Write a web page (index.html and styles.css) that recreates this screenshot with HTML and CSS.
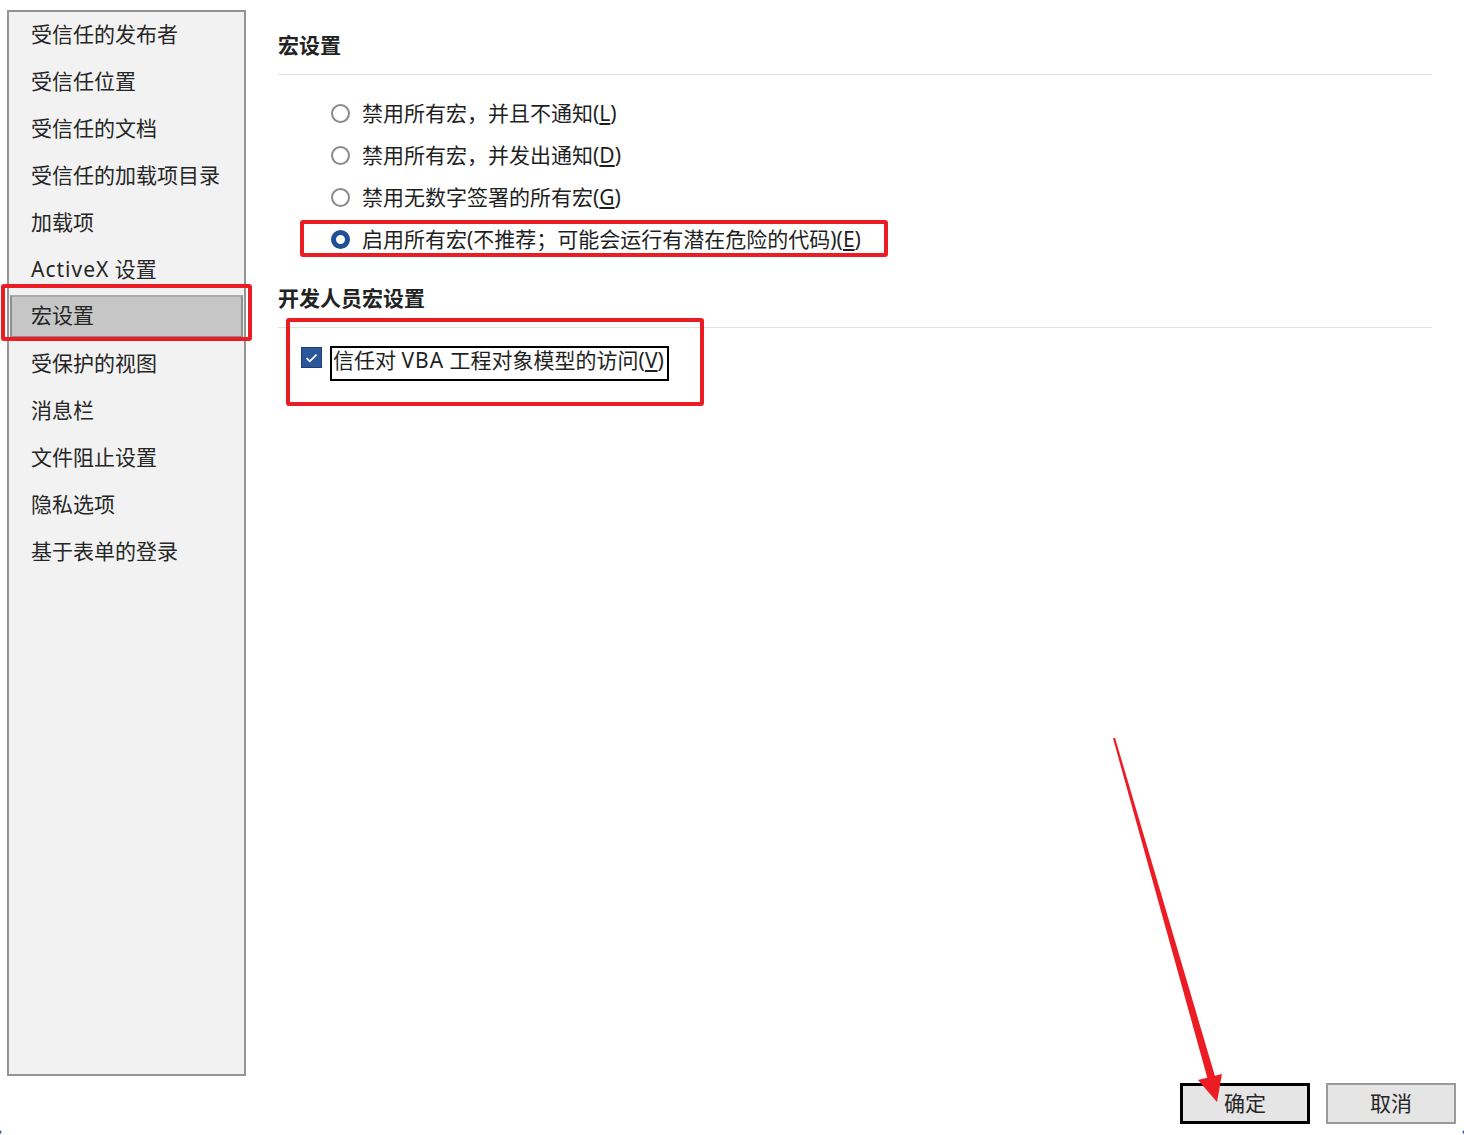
FILE: index.html
```html
<!DOCTYPE html>
<html lang="zh-CN">
<head>
    <meta charset="UTF-8">
    <meta name="viewport" content="width=device-width, initial-scale=1.0">
    <title>信任中心</title>
    <link rel="stylesheet" href="styles.css">
</head>
<body>

    <div class="dialog">
        <div class="content">
            <ul class="nav">
                <li class="nav-item">受信任的发布者</li>
                <li class="nav-item">受信任位置</li>
                <li class="nav-item">受信任的文档</li>
                <li class="nav-item">受信任的加载项目录</li>
                <li class="nav-item">加载项</li>
                <li class="nav-item"><span class="latin">ActiveX</span> 设置</li>
                <li class="nav-item active">宏设置<span class="mark nav-mark"></span></li>
                <li class="nav-item">受保护的视图</li>
                <li class="nav-item">消息栏</li>
                <li class="nav-item">文件阻止设置</li>
                <li class="nav-item">隐私选项</li>
                <li class="nav-item">基于表单的登录</li>
            </ul>

            <div class="main">
                <h2 class="section-title">宏设置</h2>
                <div class="radio-list">
                    <div class="radio-row"><span class="radio"></span>禁用所有宏，并且不通知(<u>L</u>)</div>
                    <div class="radio-row"><span class="radio"></span>禁用所有宏，并发出通知(<u>D</u>)</div>
                    <div class="radio-row"><span class="radio"></span>禁用无数字签署的所有宏(<u>G</u>)</div>
                    <div class="radio-row"><span class="radio checked"></span>启用所有宏(不推荐；可能会运行有潜在危险的代码)(<u>E</u>)<span class="mark radio-mark"></span></div>
                </div>

                <h2 class="section-title second">开发人员宏设置</h2>
                <div class="dev-options">
                    <div class="check-row">
                        <span class="checkbox">
                            <svg width="13" height="10" viewBox="0 0 13 10"><path d="M1.5 5.2 L4.8 8.3 L11.5 1.6" fill="none" stroke="#fff" stroke-width="1.8"/></svg>
                        </span>
                        <span class="check-label">信任对 <span class="latin">VBA</span> 工程对象模型的访问(<u>V</u>)</span>
                        <span class="mark check-mark"></span>
                    </div>
                </div>
            </div>
        </div>

        <div class="footer">
            <button class="btn btn-default">确定</button>
            <button class="btn">取消</button>
        </div>
    </div>

    <!-- 标注箭头 -->
    <svg class="arrow" width="1464" height="1135" viewBox="0 0 1464 1135">
        <polygon points="1113,738.3 1115,737.7 1215.8,1078.9 1208.2,1081.1" fill="#ec1c24"/>
        <polygon points="1198,1080 1222,1074 1217,1102" fill="#ec1c24"/>
    </svg>

    <span class="corner corner-left"></span>
    <span class="corner corner-right"></span>

</body>
</html>
```

FILE: styles.css
```css
*{
    margin: 0;
    padding: 0;
    box-sizing: border-box;
}

body{
    width: 1464px;
    height: 1135px;
    background: #fff;
    font-family: "Noto Sans", "Noto Sans CJK SC", sans-serif;
    font-size: 21px;
    color: #1f1f1f;
    position: relative;
    overflow: hidden;
}

.content{
    display: flex;
}

.latin{
    letter-spacing: 1px;
}

/* 左侧列表 */
.nav{
    list-style: none;
    width: 239px;
    height: 1066px;
    margin: 10px 0 0 7px;
    background: #f2f2f2;
    border: 2px solid #949494;
}

.nav-item{
    position: relative;
    height: 47px;
    line-height: 44px;
    padding-left: 22px;
    color: #262626;
}

.nav-item.active{
    height: 43px;
    line-height: 37px;
    margin: 1px 1px 3px 1px;
    padding-left: 19px;
    background: #c6c6c6;
    border: 2px solid #8e8e8e;
    border-top-color: #a9a9a9;
}

/* 红色标注框 */
.mark{
    position: absolute;
    border: 4px solid #ec1c24;
    border-radius: 3px;
    pointer-events: none;
}

.nav-mark{
    left: -11px;
    right: -11px;
    top: -13px;
    bottom: -5px;
}

/* 右侧内容 */
.main{
    flex: 1;
    padding: 27px 32px 0 32px;
}

.section-title{
    font-size: 21px;
    font-weight: bold;
    line-height: 36px;
    padding-bottom: 11px;
    border-bottom: 1px solid #e1e1e1;
    color: #222;
}

.section-title.second{
    margin-top: 20px;
}

.radio-list{
    margin-top: 17px;
    padding-left: 53px;
}

.radio-row{
    position: relative;
    display: flex;
    align-items: center;
    height: 42px;
    line-height: 42px;
}

.radio{
    width: 19px;
    height: 19px;
    border: 2px solid #8a8a8a;
    border-radius: 50%;
    margin-right: 12px;
    background: #fff;
}

.radio.checked{
    border: 5px solid #1f4f95;
}

.radio-mark{
    left: -31px;
    top: 2px;
    width: 588px;
    height: 37px;
}

.dev-options{
    display: flex;
    padding-left: 23px;
    margin-top: 18px;
}

.check-row{
    position: relative;
    display: flex;
    align-items: flex-start;
}

.checkbox{
    display: flex;
    align-items: center;
    justify-content: center;
    width: 21px;
    height: 21px;
    margin: 1px 8px 0 0;
    background: #2b579a;
    border: 1px solid #1e3f73;
}

.check-label{
    border: 2px solid #000;
    line-height: 22px;
    padding: 1px 3px 8px 1px;
}

.check-mark{
    left: -15px;
    top: -28px;
    width: 418px;
    height: 88px;
}

/* 底部按钮 */
.footer{
    display: flex;
    justify-content: flex-end;
    gap: 16px;
    margin-top: 7px;
    padding-right: 8px;
}

.btn{
    width: 130px;
    height: 41px;
    padding-bottom: 3px;
    font-family: inherit;
    font-size: 21px;
    color: #262626;
    background: #e5e5e5;
    border: 2px solid #9a9a9a;
}

.btn-default{
    border: 3px solid #000;
}

.arrow{
    position: absolute;
    left: 0;
    top: 0;
    pointer-events: none;
}

/* 窗口圆角 */
.corner{
    position: absolute;
    width: 16px;
    height: 16px;
    border: 2px solid #2b5aa8;
    border-radius: 50%;
}

.corner-left{
    left: -2px;
    bottom: -9px;
    border-color: transparent transparent transparent #2b5aa8;
}

.corner-right{
    right: -2px;
    bottom: -9px;
    border-color: transparent #2b5aa8 transparent transparent;
}
```
